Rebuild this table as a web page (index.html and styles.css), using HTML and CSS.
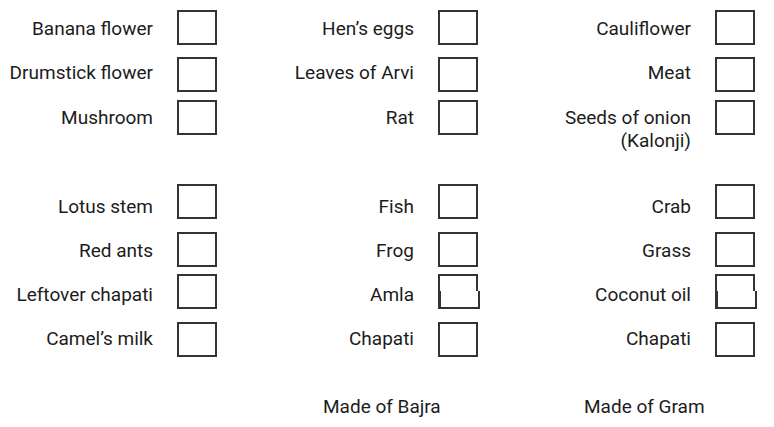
FILE: index.html
```html
<!DOCTYPE html>
<html lang="en">
<head>
<meta charset="utf-8">
<title>Food items</title>
<link rel="stylesheet" href="styles.css">
</head>
<body>
<main class="sheet">
  <div class="row row-1">
    <div class="item"><span class="label">Banana flower</span><span class="box"></span></div>
    <div class="item"><span class="label">Hen’s eggs</span><span class="box"></span></div>
    <div class="item"><span class="label">Cauliflower</span><span class="box"></span></div>
  </div>
  <div class="row row-2">
    <div class="item"><span class="label">Drumstick flower</span><span class="box"></span></div>
    <div class="item"><span class="label">Leaves of Arvi</span><span class="box"></span></div>
    <div class="item"><span class="label">Meat</span><span class="box"></span></div>
  </div>
  <div class="row row-3">
    <div class="item"><span class="label">Mushroom</span><span class="box"></span></div>
    <div class="item"><span class="label">Rat</span><span class="box"></span></div>
    <div class="item"><span class="label">Seeds of onion<br>(Kalonji)</span><span class="box"></span></div>
  </div>
  <div class="row row-4">
    <div class="item"><span class="label">Lotus stem</span><span class="box"></span></div>
    <div class="item"><span class="label">Fish</span><span class="box"></span></div>
    <div class="item"><span class="label">Crab</span><span class="box"></span></div>
  </div>
  <div class="row row-5">
    <div class="item"><span class="label">Red ants</span><span class="box"></span></div>
    <div class="item"><span class="label">Frog</span><span class="box"></span></div>
    <div class="item"><span class="label">Grass</span><span class="box"></span></div>
  </div>
  <div class="row row-6">
    <div class="item"><span class="label">Leftover chapati</span><span class="box"></span></div>
    <div class="item"><span class="label">Amla</span><span class="box box-split"></span></div>
    <div class="item"><span class="label">Coconut oil</span><span class="box box-split"></span></div>
  </div>
  <div class="row row-7">
    <div class="item"><span class="label">Camel’s milk</span><span class="box"></span></div>
    <div class="item"><span class="label">Chapati</span><span class="box"></span></div>
    <div class="item"><span class="label">Chapati</span><span class="box"></span></div>
  </div>
  <div class="row row-notes">
    <div class="note"></div>
    <div class="note">Made of Bajra</div>
    <div class="note">Made of Gram</div>
  </div>
</main>
</body>
</html>
```

FILE: styles.css
```css
html, body {
  margin: 0;
  padding: 0;
  background: #ffffff;
}

body {
  font-family: Roboto, "Liberation Sans", Arial, sans-serif;
  font-size: 19px;
  line-height: 23px;
  color: #1c1c1c;
}

.sheet {
  padding-top: 10px;
}

.row {
  display: grid;
  grid-template-columns: 217px 261px 277px;
}

.row-1 { height: 47px; }
.row-2 { height: 43px; }
.row-3 { height: 84px; }
.row-4 { height: 48px; }
.row-5 { height: 42px; }
.row-6 { height: 48px; }
.row-7 { height: 73px; }

.item {
  display: flex;
  justify-content: flex-end;
  align-items: flex-start;
  gap: 24px;
}

.label {
  text-align: right;
  padding-top: 7px;
  white-space: nowrap;
}

.row-2 .label { padding-top: 4px; }
.row-3 .label { padding-top: 6px; }
.row-4 .label { padding-top: 11px; }
.row-6 .label { padding-top: 9px; }
.row-7 .label { padding-top: 5px; }

.box {
  flex: none;
  box-sizing: border-box;
  width: 40px;
  height: 35px;
  border: 2px solid #333333;
  background: #ffffff;
}

/* the lower half of these boxes is printed slightly askew */
.box-split {
  position: relative;
}

.box-split::after {
  content: "";
  position: absolute;
  top: 15px;
  left: -1px;
  right: -4px;
  bottom: -2px;
  border: 2px solid #333333;
  border-top: none;
  background: #ffffff;
}

.note {
  padding-left: 106px;
  white-space: nowrap;
}
```
